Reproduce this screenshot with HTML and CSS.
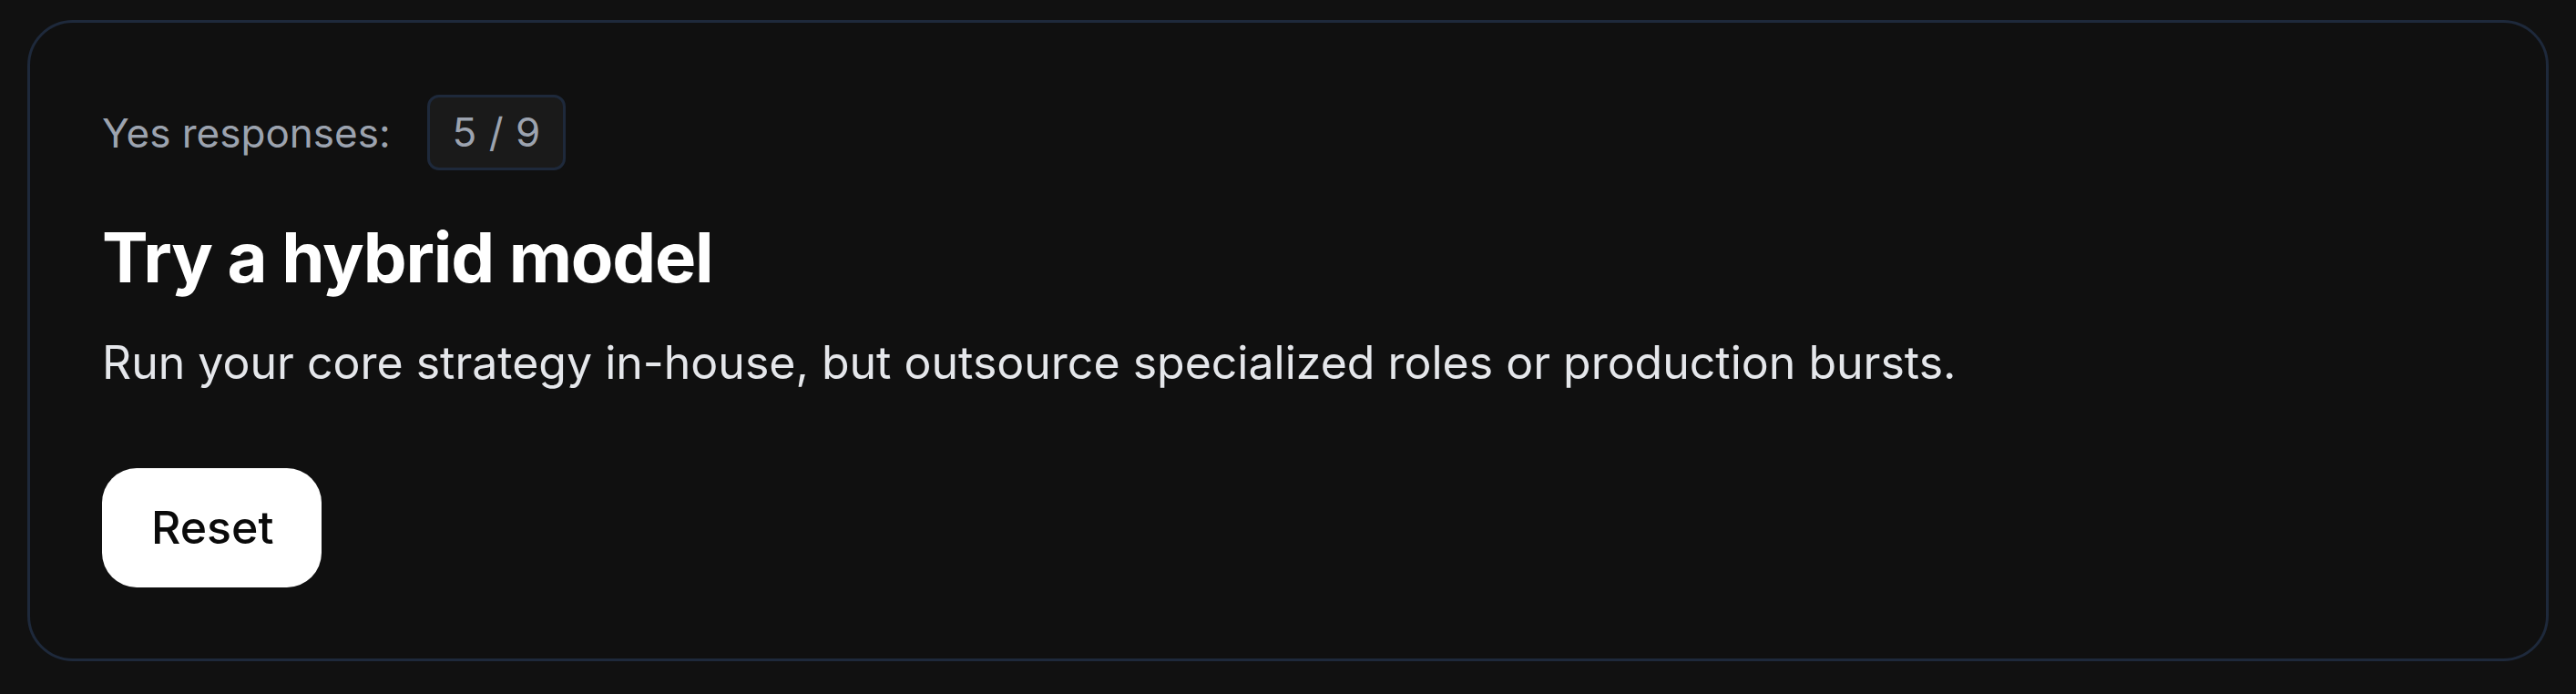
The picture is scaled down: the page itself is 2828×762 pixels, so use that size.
FILE: index.html
```html
<!DOCTYPE html>
<html lang="en">
<head>
<meta charset="utf-8">
<title>Hybrid model</title>
<link rel="stylesheet" href="styles.css">
</head>
<body>
<main class="page">
  <section class="card">
    <div class="stat-row">
      <span class="stat-label">Yes responses:</span>
      <span class="stat-badge">5 / 9</span>
    </div>
    <h2 class="result-title">Try a hybrid model</h2>
    <p class="result-text">Run your core strategy in-house, but outsource specialized roles or production bursts.</p>
    <button class="reset-btn" type="button">Reset</button>
  </section>
</main>
</body>
</html>
```
FILE: styles.css
```css
* { box-sizing: border-box; }
html, body {
  margin: 0;
  padding: 0;
  background: #111111;
  font-family: Inter, "Noto Sans", "Liberation Sans", sans-serif;
}
.page {
  padding: 22px 30px 36px 30px;
}
.card {
  background: #101010;
  border: 3px solid #1e293b;
  border-radius: 50px;
  padding: 79px 78px 78px 79px;
  display: flex;
  flex-direction: column;
  align-items: flex-start;
}
.stat-row {
  display: flex;
  align-items: center;
  gap: 40px;
  height: 83px;
}
.stat-label {
  font-size: 44px;
  color: #9ca3af;
  line-height: 1;
}
.stat-badge {
  font-size: 44px;
  line-height: 65px;
  color: #9ca3af;
  background: #1a1a1a;
  border: 3px solid #1e293b;
  border-radius: 13px;
  padding: 6px 25px;
  word-spacing: 1px;
}
.result-title {
  margin: 45px 0 0 0;
  font-size: 76px;
  line-height: 101px;
  font-weight: 700;
  color: #ffffff;
  letter-spacing: -1.2px;
}
.result-text {
  margin: 28px 0 0 0;
  font-size: 50px;
  line-height: 75px;
  color: #e5e7eb;
}
.reset-btn {
  margin-top: 78px;
  font-family: inherit;
  font-size: 50px;
  line-height: 75px;
  font-weight: 500;
  color: #0a0a0a;
  background: #ffffff;
  border: none;
  border-radius: 38px;
  padding: 28px 54px;
  height: 131px;
  width: 241px;
}
```
